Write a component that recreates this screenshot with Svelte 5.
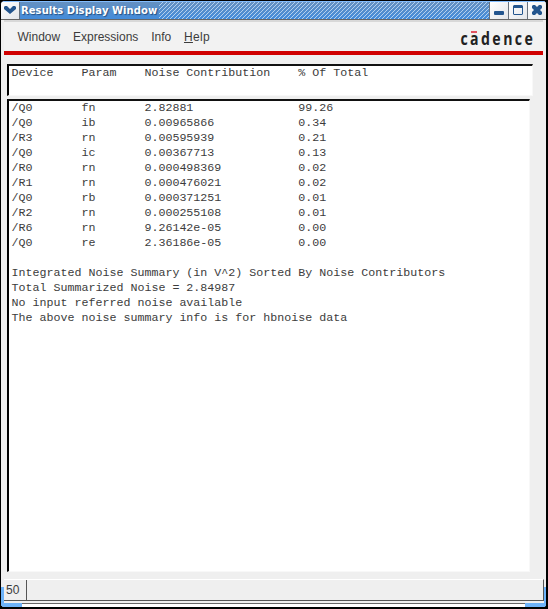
<script>
  const menus = ['Window', 'Expressions', 'Info'];
  const logo = [['c', 0.4], ['a', 10], ['d', 21], ['e', 32.2], ['n', 43.2], ['c', 54.8], ['e', 64.4]];
  const header = 'Device    Param    Noise Contribution    % Of Total';
  const rows = [
    ['/Q0', 'fn', '2.82881', '99.26'],
    ['/Q0', 'ib', '0.00965866', '0.34'],
    ['/R3', 'rn', '0.00595939', '0.21'],
    ['/Q0', 'ic', '0.00367713', '0.13'],
    ['/R0', 'rn', '0.000498369', '0.02'],
    ['/R1', 'rn', '0.000476021', '0.02'],
    ['/Q0', 'rb', '0.000371251', '0.01'],
    ['/R2', 'rn', '0.000255108', '0.01'],
    ['/R6', 'rn', '9.26142e-05', '0.00'],
    ['/Q0', 're', '2.36186e-05', '0.00']
  ];
  const summary = [
    'Integrated Noise Summary (in V^2) Sorted By Noise Contributors',
    'Total Summarized Noise = 2.84987',
    'No input referred noise available',
    'The above noise summary info is for hbnoise data'
  ];
  const body = [
    ...rows.map(([d, p, n, t]) => d.padEnd(10) + p.padEnd(9) + n.padEnd(22) + t),
    '',
    ...summary
  ].join('\n');
</script>

<div class="window">
  <div class="titlebar">
    <div class="btn">
      <svg width="18" height="17" viewBox="0 0 18 17"><path d="M3 5l1-1h2l3 3 3-3h2l1 1v2l-6 5-6-5z" fill="#23558e" /></svg>
    </div>
    <div class="title">Results Display Window</div>
    <div class="stripes">
      <svg width="100%" height="17">
        <defs>
          <pattern id="hatch" width="4" height="4" patternUnits="userSpaceOnUse">
            <path d="M3 0h1v1h-1zM2 1h1v1h-1zM1 2h1v1h-1zM0 3h1v1h-1z" fill="#b4d0ee" shape-rendering="crispEdges" />
          </pattern>
        </defs>
        <rect width="100%" height="17" fill="url(#hatch)" />
      </svg>
    </div>
    <div class="btn">
      <svg width="18" height="17" viewBox="0 0 18 17"><rect x="4" y="9" width="10" height="4" rx="1" fill="#23558e" /></svg>
    </div>
    <div class="btn">
      <svg width="18" height="17" viewBox="0 0 18 17"><path d="M5 3h8l1 1v8l-1 1H5l-1-1V4zM5 6v6h8V6z" fill="#23558e" fill-rule="evenodd" /></svg>
    </div>
    <div class="btn">
      <svg width="18" height="17" viewBox="0 0 18 17"><path d="M4 4l1-1h2l2 2 2-2h2l1 1v2l-2 2 2 2v2l-1 1h-2l-2-2-2 2H5l-1-1v-2l2-2-2-2z" fill="#23558e" /></svg>
    </div>
  </div>
  <div class="menubar">
    {#each menus as m}<span>{m}</span>{/each}
    <span class="help"><u>H</u>elp</span>
    <svg class="logo" width="74" height="27" viewBox="0 0 74 27">
      {#each logo as [ch, x]}
        <text transform="translate({x} 20) scale(0.83 1)">{ch}</text>
      {/each}
      <rect x="11" y="6" width="6" height="2" fill="#e25563" />
    </svg>
  </div>
  <div class="client">
    <pre class="head">{header}</pre>
    <pre class="output">{body}</pre>
  </div>
  <div class="status"><div class="count">50</div></div>
  <div class="bottom"><i></i><b></b><i></i></div>
  <div class="grip left"></div>
  <div class="grip right"></div>
</div>

<style>
  :global(body) { background: #000; }
  .window {
    position: relative;
    box-sizing: border-box;
    width: 548px;
    height: 609px;
    overflow: hidden;
    display: flex;
    flex-direction: column;
    background: #efefef;
    border: 1px solid #000;
    border-right-width: 2px;
    border-bottom-width: 2px;
    border-radius: 5px;
    color: #3c3c3c;
    font-family: "Liberation Sans", Arial, sans-serif;
  }
  .titlebar {
    height: 17px;
    flex: none;
    display: flex;
    border-top: 1px solid #82bdff;
    border-bottom: 1px solid #666;
    background: linear-gradient(#6590c0, #438cdb);
  }
  .btn {
    width: 18px;
    height: 17px;
    background: linear-gradient(135deg, #fff, #e4e6ea);
    border-right: 1px solid #68727e;
  }
  .btn:last-child { border-right: 0; }
  .stripes + .btn { border-left: 1px solid #68727e; }
  .btn svg, .stripes svg { display: block; }
  .title {
    width: 139px;
    padding-left: 1px;
    box-sizing: border-box;
    font: bold 10px/17px "DejaVu Sans", sans-serif;
    letter-spacing: 0.07px;
    white-space: nowrap;
    color: #fff;
    text-shadow: 1px 1px 1px #234f82;
  }
  .stripes { flex: 1; min-width: 0; }
  .menubar {
    flex: none;
    height: 31px;
    margin: 0 3px;
    box-sizing: border-box;
    display: flex;
    padding: 0 9px 0 13.5px;
    font-size: 12px;
    line-height: 31px;
    border-top: 2px solid #d8d8d8;
    background: #f2f2f2;
    box-shadow: 0 4px #d00000;
  }
  .menubar > span { margin-right: 12.8px; }
  .help { letter-spacing: 0.3px; }
  .logo {
    flex: none;
    margin: 3px 0 0 auto;
    font: bold 17px/20px "Open Sans", sans-serif;
    fill: #222;
    overflow: visible;
  }
  .client { flex: 1; padding: 13px 13px 0 6px; }
  pre {
    margin: 0;
    box-sizing: border-box;
    background: #fff;
    border: 2px solid #000;
    border-top-color: #111;
    border-right: 1px solid #f8f8f8;
    border-bottom: 1px solid #f8f8f8;
    padding: 0 2.5px;
    font: 11.667px/15px "Liberation Mono", "Courier New", monospace;
  }
  .head { width: 526px; height: 32px; }
  .output { width: 523px; height: 473px; margin-top: 3px; }
  .status {
    flex: none;
    height: 22px;
    margin: 0 2px 0 3px;
    box-sizing: border-box;
    border-top: 1px solid #fff;
    border-bottom: 1px solid #555;
    border-right: 1px solid #555;
  }
  .count {
    width: 23px;
    height: 20px;
    box-sizing: border-box;
    border-right: 1px solid #555;
    padding-left: 2px;
    font-size: 12px;
    line-height: 21px;
  }
  .bottom { flex: none; height: 6px; display: flex; align-items: flex-end; }
  .bottom i { width: 21px; height: 4px; background: #6db3fa; }
  .bottom b { flex: 1; height: 4px; box-sizing: border-box; border-top: 1px solid #666; background: #fff; }
  .grip { position: absolute; bottom: 0; height: 20px; background: #6db3fa; }
  .grip.left { left: 0; width: 3px; }
  .grip.right { right: 0; width: 2px; }
</style>
